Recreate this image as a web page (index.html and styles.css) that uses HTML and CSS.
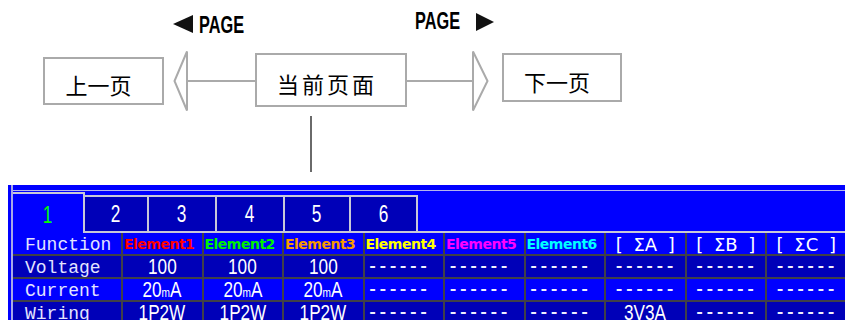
FILE: index.html
```html
<!DOCTYPE html>
<html lang="zh-CN">
<head>
  <meta charset="UTF-8" />
  <meta name="viewport" content="width=device-width, initial-scale=1.0"/>
  <title>Page navigation</title>
  <link rel="stylesheet" href="styles.css">
</head>
<body>
  <div class="diagram">
    <div class="labels">
      <div class="pg pg-prev">
        <svg width="20" height="18"><polygon points="0,9 20,0 20,18" fill="#111"/></svg>
        <span class="pg-txt">PAGE</span>
      </div>
      <div class="pg pg-next">
        <span class="pg-txt">PAGE</span>
        <svg width="18" height="18"><polygon points="0,0 18,9 0,18" fill="#111"/></svg>
      </div>
    </div>

    <div class="nav">
      <div class="box box-prev">上一页</div>
      <svg class="arrow arrow-l" width="82" height="62">
        <path d="M14 1.5 L1.5 31 L14 60.5 Z M14 31 H82" fill="none" stroke="#aaa" stroke-width="2"/>
      </svg>
      <div class="box box-cur">当前页面</div>
      <svg class="arrow arrow-r" width="82" height="62">
        <path d="M0 31 H66 M66 1.5 L80.5 31 L66 60.5 Z" fill="none" stroke="#aaa" stroke-width="2"/>
      </svg>
      <div class="box box-next">下一页</div>
    </div>

    <div class="stem"></div>
  </div>

  <div class="screen">
    <div class="frame">
      <div class="topline"></div>
      <div class="tabs">
        <div class="tab on"><span class="num">1</span></div>
        <div class="tab"><span class="num">2</span></div>
        <div class="tab"><span class="num">3</span></div>
        <div class="tab"><span class="num">4</span></div>
        <div class="tab"><span class="num">5</span></div>
        <div class="tab"><span class="num">6</span></div>
        <div class="tab-fill"></div>
      </div>

      <div class="grid">
        <div class="row hd">
          <div class="lbl">Function</div>
          <div class="el e1">Element1</div>
          <div class="el e2">Element2</div>
          <div class="el e3">Element3</div>
          <div class="el e4">Element4</div>
          <div class="el e5">Element5</div>
          <div class="el e6">Element6</div>
          <div class="sum">[ ΣA ]</div>
          <div class="sum">[ ΣB ]</div>
          <div class="sum">[ ΣC ]</div>
        </div>
        <div class="row dk">
          <div class="lbl">Voltage</div>
          <div class="val"><span class="v">100</span></div>
          <div class="val"><span class="v">100</span></div>
          <div class="val"><span class="v">100</span></div>
          <div class="dash">------</div>
          <div class="dash">------</div>
          <div class="dash">------</div>
          <div class="dash sd">------</div>
          <div class="dash sd">------</div>
          <div class="dash sd">------</div>
        </div>
        <div class="row lt">
          <div class="lbl">Current</div>
          <div class="val"><span class="v">20<small>m</small>A</span></div>
          <div class="val"><span class="v">20<small>m</small>A</span></div>
          <div class="val"><span class="v">20<small>m</small>A</span></div>
          <div class="dash">------</div>
          <div class="dash">------</div>
          <div class="dash">------</div>
          <div class="dash sd">------</div>
          <div class="dash sd">------</div>
          <div class="dash sd">------</div>
        </div>
        <div class="row dk">
          <div class="lbl">Wiring</div>
          <div class="val"><span class="v">1P2W</span></div>
          <div class="val"><span class="v">1P2W</span></div>
          <div class="val"><span class="v">1P2W</span></div>
          <div class="dash">------</div>
          <div class="dash">------</div>
          <div class="dash">------</div>
          <div class="val"><span class="v">3V3A</span></div>
          <div class="dash sd">------</div>
          <div class="dash sd">------</div>
        </div>
      </div>
    </div>
  </div>
</body>
</html>
```

FILE: styles.css
```css
* { box-sizing: border-box; }
body { margin: 0; background: #fff; color: #111; font-family: "Liberation Sans", "Noto Sans CJK SC", sans-serif; width: 845px; height: 320px; overflow: hidden; }

/* top diagram */
.diagram { height: 185px; }
.labels { display: flex; align-items: flex-start; height: 50px; }
.pg { display: flex; align-items: flex-start; }
.pg svg { display: block; }
.pg-prev { margin-left: 173px; margin-top: 15px; }
.pg-prev .pg-txt { margin-left: 6px; margin-top: 1px; }
.pg-next { margin-left: 168px; margin-top: 12px; }
.pg-next svg { margin-left: 13px; margin-top: 1px; }
.pg-txt {
  display: inline-block; width: 48px; white-space: nowrap; font-weight: bold; font-size: 24px; line-height: 18px;
  color: #000; transform: scaleX(0.68); transform-origin: left top;
}

.nav { display: flex; align-items: flex-start; height: 62px; padding-left: 43px; }
.box {
  display: flex; align-items: center; justify-content: center; padding-top: 5px; padding-right: 10px;
  border: 2px solid #aaa; font-family: "Noto Sans CJK SC", sans-serif; font-size: 22px; color: #000;
}
.box-prev { width: 121px; height: 48px; margin-top: 7px; }
.box-cur { width: 152px; height: 54px; margin-top: 3px; letter-spacing: 3px; padding-right: 8px; }
.box-next { width: 120px; height: 49px; margin-top: 3px; margin-left: 13px; padding-top: 7px; }
.arrow { display: block; flex: none; }
.arrow-l { margin-left: 9px; }

.stem { width: 2px; height: 56px; margin: 4px 0 0 310px; background: #6a6a6a; }

/* instrument screen */
.screen { margin-left: 8px; height: 135px; background: #0000ff; overflow: hidden; padding-left: 3px; }
.frame { height: 100%; border-left: 2px solid #a8a8e8; }
.topline { height: 6px; border-bottom: 1px solid #b4b4ec; }

.tabs { display: flex; align-items: flex-end; height: 42px; }
.tab {
  display: flex; align-items: center; justify-content: center; height: 38px;
  background: #0000b8; border-top: 2px solid #c8c8d8; border-right: 2px solid #c8c8d8; border-bottom: 2px solid #c8c8d8;
}
.tab.on { height: 41px; background: #0000ff; border-bottom: none; padding-top: 2px; }
.tab:nth-child(1) { width: 72px; }
.tab:nth-child(2) { width: 64px; }
.tab:nth-child(3) { width: 68px; }
.tab:nth-child(4) { width: 68px; }
.tab:nth-child(5) { width: 66px; }
.tab:nth-child(6) { width: 67px; }
.tab-fill { flex: 1; border-bottom: 2px solid #c8c8d8; }
.num {
  display: inline-block; font-size: 24px; line-height: 24px; color: #fff;
  transform: scaleX(0.72);
}
.tab.on .num { color: #00ff00; }

.grid {
  display: grid; grid-template-columns: 108px repeat(9, 78.5px); grid-auto-rows: 21px; gap: 2px;
  background: #404048;
}
.row { display: contents; }
.row > div { line-height: 21px; white-space: nowrap; color: #fff; }
.hd > div { background: #0000ff; }
.dk > div { background: #0000b8; }
.lt > div { background: #0000ff; }

.lbl { padding: 2px 0 0 12px; font-family: "Liberation Mono", monospace; font-size: 18px; color: #e4e4ff !important; }
.el { padding: 1px 0 0 1px; font-family: "DejaVu Sans", sans-serif; font-weight: bold; font-size: 14px; letter-spacing: -0.5px; }
.e1 { color: #ff0000 !important; }
.e2 { color: #00f000 !important; }
.e3 { color: #f59a00 !important; }
.e4 { color: #ffff00 !important; }
.e5 { color: #ff00ff !important; }
.e6 { color: #00ffff !important; }
.sum { padding-top: 1px; text-align: center; font-family: "DejaVu Sans", sans-serif; font-size: 18px; word-spacing: 5px; }

.val { text-align: center; }
.v { display: inline-block; font-size: 22px; line-height: 21px; transform: scaleX(0.78); }
.v small { font-size: 13px; }
.dash { padding-left: 3px; font-family: "Liberation Mono", monospace; font-weight: bold; font-size: 17px; color: #f0f0ff !important; }
.dash.sd { padding-left: 8px; }
```
